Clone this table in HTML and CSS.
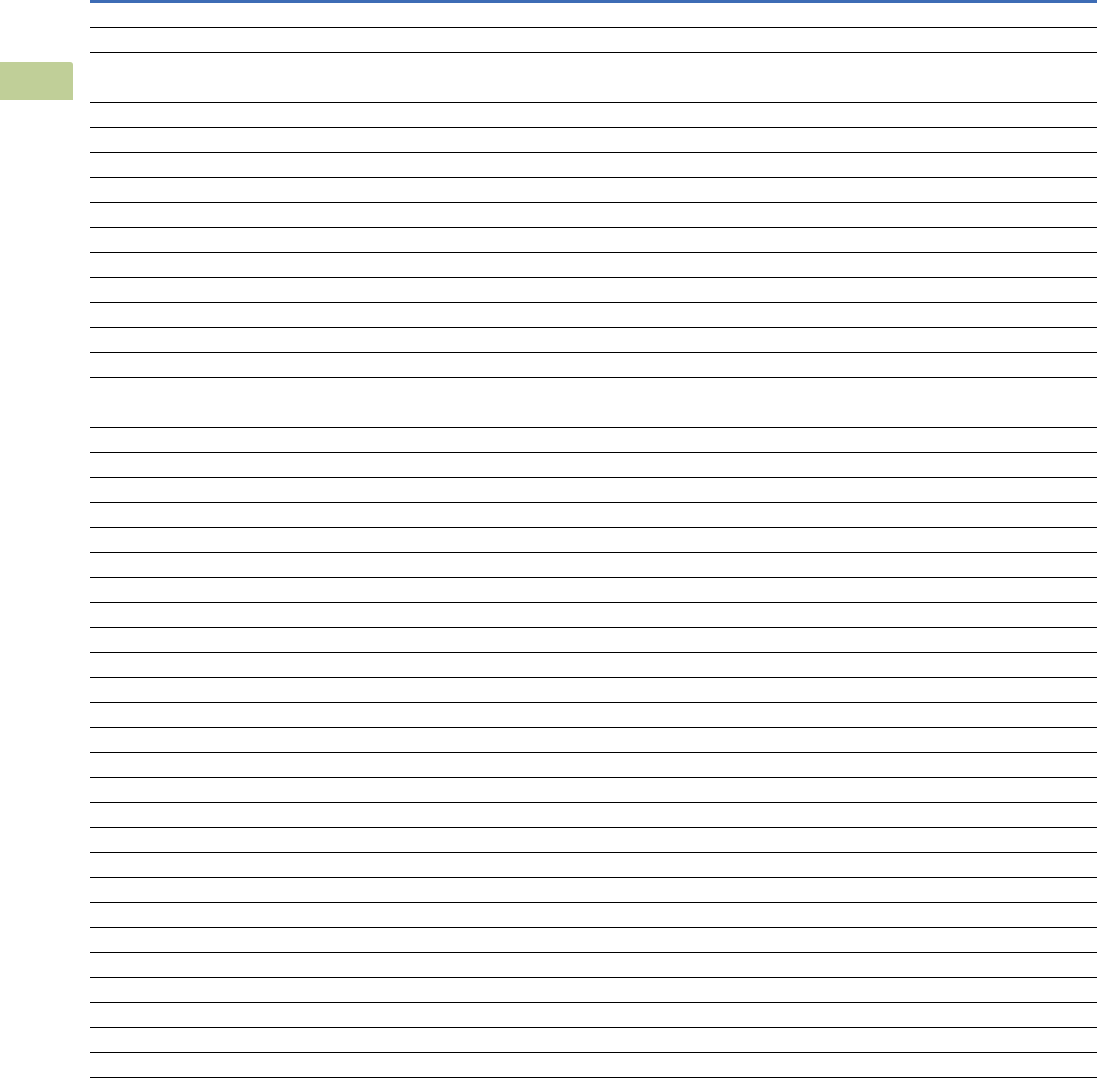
FILE: index.html
```html
<!DOCTYPE html>
<html lang="en">
<head>
  <meta charset="UTF-8" />
  <meta name="viewport" content="width=device-width, initial-scale=1.0" />
  <title>Ruled sheet</title>
  <link rel="stylesheet" href="styles.css">
</head>
<body>
  <div class="page">
    <div class="side">
      <div class="side-tab"></div>
    </div>
    <div class="sheet">
      <div class="sheet-head"></div>
      <div class="line"></div>
      <div class="line"></div>
      <div class="line tall"></div>
      <div class="line"></div>
      <div class="line"></div>
      <div class="line"></div>
      <div class="line"></div>
      <div class="line"></div>
      <div class="line"></div>
      <div class="line"></div>
      <div class="line"></div>
      <div class="line"></div>
      <div class="line"></div>
      <div class="line"></div>
      <div class="line tall"></div>
      <div class="line"></div>
      <div class="line"></div>
      <div class="line"></div>
      <div class="line"></div>
      <div class="line"></div>
      <div class="line"></div>
      <div class="line"></div>
      <div class="line"></div>
      <div class="line"></div>
      <div class="line"></div>
      <div class="line"></div>
      <div class="line"></div>
      <div class="line"></div>
      <div class="line"></div>
      <div class="line"></div>
      <div class="line"></div>
      <div class="line"></div>
      <div class="line"></div>
      <div class="line"></div>
      <div class="line"></div>
      <div class="line"></div>
      <div class="line"></div>
      <div class="line"></div>
      <div class="line"></div>
      <div class="line"></div>
      <div class="line"></div>
    </div>
  </div>
</body>
</html>
```
FILE: styles.css
```css
body { margin: 0; background: #fff; font-family: 'Liberation Sans', Arial, sans-serif; }
.page { display: flex; width: 1098px; }
.side { width: 90px; flex: none; }
.side-tab { margin-top: 62px; width: 73px; height: 38px; background: #c0cf98; border-top-right-radius: 3px; }
.sheet { flex: 1; min-width: 0; margin-right: 1px; }
.sheet-head { height: 3px; background: #3d6cb5; }
.line { height: 24px; border-bottom: 1px solid #000; }
.line.tall { height: 49px; }
```
